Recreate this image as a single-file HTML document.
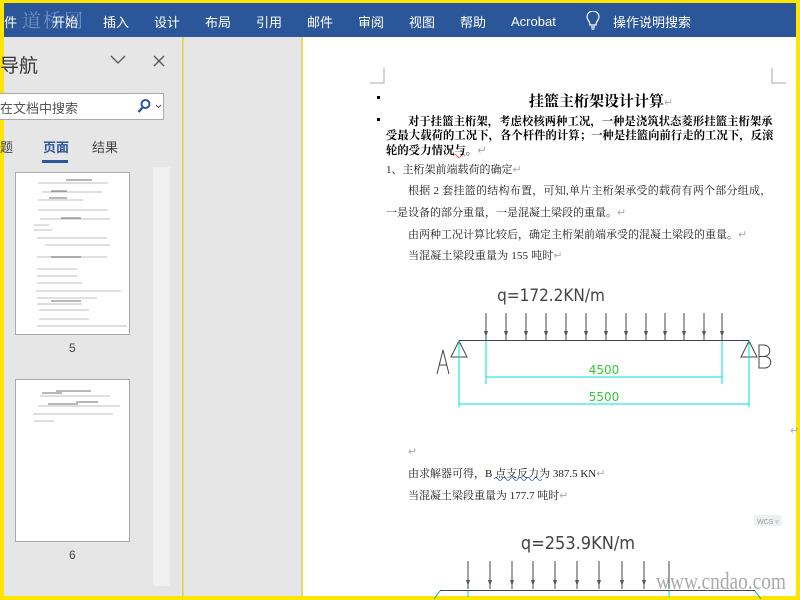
<!DOCTYPE html>
<html><head><meta charset="utf-8"><style>
*{margin:0;padding:0;box-sizing:border-box}
body{width:800px;height:600px;overflow:hidden;background:#ffe500;position:relative;font-family:"Liberation Sans","Noto Sans CJK SC",sans-serif}
.a{position:absolute;white-space:nowrap}
#rib{left:4px;top:3px;width:792px;height:34px;background:#2b579a;color:#fff;font-size:13px}
#rib span{position:absolute;top:9px}
#nav{left:4px;top:37px;width:179px;height:559px;background:#e6e6e6;border-right:1px solid #c8c8c8}
#can{left:184px;top:37px;width:118px;height:559px;background:#e6e6e6;border-right:1px solid #cfcfcf}
#pg{left:303px;top:37px;width:493px;height:559px;background:#fff}
.d{font-family:"Liberation Serif","Noto Serif CJK SC","Noto Sans CJK SC",serif;font-size:11px;color:#222;letter-spacing:0px}
.b{font-weight:bold;font-size:11.3px;letter-spacing:0.1px;color:#000}
.th{background:#fff;border:1px solid #aaa}
.ret{color:#aaa}
</style></head><body>
<div id="rib" class="a">
<span style="left:0">件</span>
<span style="left:48px">开始</span><span style="left:99px">插入</span><span style="left:150px">设计</span><span style="left:201px">布局</span><span style="left:252px">引用</span><span style="left:303px">邮件</span><span style="left:354px">审阅</span><span style="left:405px">视图</span><span style="left:456px">帮助</span><span style="left:507px;top:11px">Acrobat</span>
<svg class="a" style="left:582px;top:8px" width="14" height="20" viewBox="0 0 14 20"><path d="M4 14 C4 10 1 9 1 6 A6 6 0 0 1 13 6 C13 9 10 10 10 14 Z M5 16h4 M5.5 18h3" fill="none" stroke="#fff" stroke-width="1.2"/></svg>
<span style="left:609px">操作说明搜索</span>
<span style="left:18px;top:3px;font-size:19px;color:rgba(200,210,230,.45);font-family:'Noto Serif CJK SC',serif;letter-spacing:2px">道桥网</span>
</div>
<div id="nav" class="a">
<div class="a" style="left:-4px;top:14px;font-size:19px;color:#333">导航</div>
<svg class="a" style="left:106px;top:18px" width="16" height="10"><path d="M1 1l7 7 7-7" fill="none" stroke="#555" stroke-width="1.3"/></svg>
<svg class="a" style="left:149px;top:18px" width="12" height="12"><path d="M1 1l10 10M11 1L1 11" stroke="#555" stroke-width="1.3"/></svg>
<div class="a" style="left:-6px;top:56px;width:166px;height:27px;background:#fff;border:1px solid #aaa"></div>
<div class="a" style="left:-4px;top:61px;font-size:13px;color:#555">在文档中搜索</div>
<svg class="a" style="left:133px;top:61px" width="14" height="16"><circle cx="8.5" cy="6" r="4" fill="none" stroke="#2b579a" stroke-width="2"/><path d="M6 9L1.5 14" stroke="#2b579a" stroke-width="2.4"/></svg>
<svg class="a" style="left:151px;top:67px" width="7" height="5"><path d="M1 1l2.5 2.5L6 1" fill="none" stroke="#555"/></svg>
<div class="a" style="left:-4px;top:100px;font-size:13px;color:#444">题</div>
<div class="a" style="left:39px;top:100px;font-size:13px;color:#2b579a;font-weight:bold">页面</div>
<div class="a" style="left:38px;top:123px;width:26px;height:3px;background:#2b579a"></div>
<div class="a" style="left:88px;top:100px;font-size:13px;color:#444">结果</div>
<div class="a" style="left:149px;top:130px;width:17px;height:419px;background:#f0f0f0"></div>
<div class="a th" style="left:11px;top:135px;width:115px;height:163px">
<svg width="113" height="161"><g stroke="#ccc" stroke-width="1.2">
<path d="M22 10h70M26 19h60M22 27h45M22 37h70M24 46h70M18 52h15M18 57h18M21 65h70M29 72h65M21 84h70M21 96h40M21 103h40M21 110h45M20 118h85M21 125h60M21 131h45M23 137h50M23 146h50M21 153h90"/></g>
<g stroke="#444" stroke-width="0.8"><path d="M50 7h26M35 18h16M33 25h18M45 45h20M35 84h30M35 128h30"/></g></svg></div>
<div class="a" style="left:65px;top:304px;font-size:12px;color:#444">5</div>
<div class="a th" style="left:11px;top:342px;width:115px;height:163px">
<svg width="113" height="161"><g stroke="#ccc" stroke-width="1.2"><path d="M24 16h70M22 26h82M17 34h80M18 41h20"/></g><g stroke="#444" stroke-width="0.8"><path d="M26 13h20M40 11h35M32 24h30M60 22h22"/></g></svg></div>
<div class="a" style="left:65px;top:511px;font-size:12px;color:#444">6</div>
</div>
<div id="can" class="a"></div>
<div id="pg" class="a"></div>
<svg class="a" style="left:0;top:0" width="800" height="600">
<path d="M384 68v15h-14M772 68v15h14" fill="none" stroke="#aaa"/>
<rect x="377" y="96" width="3" height="3" fill="#000"/><rect x="377" y="118" width="3" height="3" fill="#000"/>
<text x="551" y="301" font-family="DejaVu Sans Condensed,Liberation Sans Narrow,sans-serif" font-size="17" fill="#444" text-anchor="middle">q=172.2KN/m</text>
<g stroke="#444" stroke-width="1"><path d="M459 340.5h290"/>
<path d="M486 313v27M506 313v27M526 313v27M546 313v27M566 313v27M586 313v27M606 313v27M626 313v27M646 313v27M665 313v27M684 313v27M704 313v27M722 313v27"/>
<path d="M459 341l-8 16h16z M749 341l-8 16h16z" fill="none"/>
<path d="M437 374l6-24 6 24M439.5 365h7M759 345v23h6a5 5 0 0 0 0-11.5h-6h5a5 5 0 0 0 0-11.5z" fill="none"/></g>
<g fill="#555"><path d="M484 331h4l-2 6zM504 331h4l-2 6zM524 331h4l-2 6zM544 331h4l-2 6zM564 331h4l-2 6zM584 331h4l-2 6zM604 331h4l-2 6zM624 331h4l-2 6zM644 331h4l-2 6zM663 331h4l-2 6zM682 331h4l-2 6zM702 331h4l-2 6zM720 331h4l-2 6z"/></g>
<g stroke="#0dd" stroke-width="1"><path d="M486 341v43M722 341v43M459 341v66M749 341v66M486 377h236M459 404h290"/></g>
<text x="604" y="374" font-family="DejaVu Sans,sans-serif" font-size="12" fill="#3c3" text-anchor="middle">4500</text>
<text x="604" y="401" font-family="DejaVu Sans,sans-serif" font-size="12" fill="#3c3" text-anchor="middle">5500</text>
<rect x="754" y="515" width="28" height="11" rx="3" fill="#eef0f4"/>
<text x="757" y="524" font-size="7" fill="#999" font-family="Liberation Sans">WCS ▿</text>
<text x="578" y="549" font-family="DejaVu Sans Condensed,sans-serif" font-size="18" fill="#444" text-anchor="middle">q=253.9KN/m</text>
<g stroke="#444"><path d="M440 590.5h315M468 561v28M490 561v28M512 561v28M533 561v28M555 561v28M577 561v28M599 561v28M622 561v28M644 561v28M669 561v28"/></g>
<g fill="#555"><path d="M466 580h4l-2 6zM488 580h4l-2 6zM510 580h4l-2 6zM531 580h4l-2 6zM553 580h4l-2 6zM575 580h4l-2 6zM597 580h4l-2 6zM620 580h4l-2 6zM642 580h4l-2 6z"/></g>
<path d="M468 591v6M669 591v6" stroke="#0dd"/>
<path d="M440 591l-6 8M755 591l6 8" stroke="#0aa"/>
<text x="656" y="589" font-family="Liberation Serif,serif" font-size="24" fill="#aaa" textLength="130" lengthAdjust="spacingAndGlyphs">www.cndao.com</text>
<path d="M453 156q2 -3 4 0t4 0t4 0" fill="none" stroke="#e33" stroke-width="0.8"/>
<path d="M494 479q2-3 4 0t4 0t4 0t4 0t4 0t4 0t4 0t4 0t4 0t4 0t4 0t4 0" fill="none" stroke="#36c" stroke-width="0.8"/>
</svg>
<div class="a" style="left:529px;top:90px;font-size:15px;font-weight:bold;font-family:'Noto Serif CJK SC',serif">挂篮主桁架设计计算<span class="ret" style="font-size:11px;font-weight:normal">↵</span></div>
<div class="a d b" style="left:408px;top:113px">对于挂篮主桁架，考虑校核两种工况，一种是浇筑状态菱形挂篮主桁架承</div>
<div class="a d b" style="left:386px;top:127px">受最大载荷的工况下，各个杆件的计算；一种是挂篮向前行走的工况下，反滚</div>
<div class="a d b" style="left:386px;top:142px">轮的受力情况与。<span class="ret" style="font-weight:normal">↵</span></div>
<div class="a d" style="left:386px;top:161px">1、主桁架前端载荷的确定<span class="ret">↵</span></div>
<div class="a d" style="left:408px;top:182px;letter-spacing:0.25px">根据 2 套挂篮的结构布置，可知,单片主桁架承受的载荷有两个部分组成，</div>
<div class="a d" style="left:386px;top:204px">一是设备的部分重量，一是混凝土梁段的重量。<span class="ret">↵</span></div>
<div class="a d" style="left:408px;top:226px">由两种工况计算比较后，确定主桁架前端承受的混凝土梁段的重量。<span class="ret">↵</span></div>
<div class="a d" style="left:408px;top:247px;letter-spacing:0.15px">当混凝土梁段重量为 155 吨时<span class="ret">↵</span></div>
<div class="a d ret" style="left:408px;top:445px">↵</div>
<div class="a d ret" style="left:790px;top:424px">↵</div>
<div class="a d" style="left:408px;top:465px">由求解器可得，B 点支反力为 387.5 KN<span class="ret">↵</span></div>
<div class="a d" style="left:408px;top:487px">当混凝土梁段重量为 177.7 吨时<span class="ret">↵</span></div>
</body></html>
